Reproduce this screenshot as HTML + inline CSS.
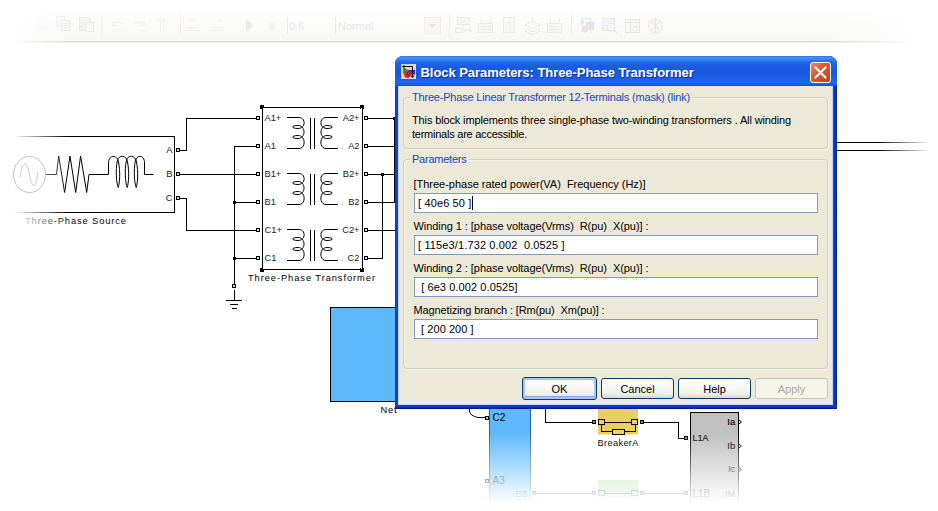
<!DOCTYPE html>
<html><head><meta charset="utf-8"><title>Block Parameters</title>
<style>
*{box-sizing:border-box;margin:0;padding:0}
html,body{width:938px;height:511px;overflow:hidden;background:#fff}
body{position:relative;font-family:"Liberation Sans",sans-serif}
#bg{position:absolute;left:0;top:0;width:938px;height:511px}
#bg text{font-family:"Liberation Sans",sans-serif}
.dlg{position:absolute;left:395px;top:56px;width:442px;height:353px;border-radius:8px 8px 0 0;
 background:linear-gradient(90deg,#0c30bc 0,#1044da 1px,#1040d4 3px,#1040d4 439px,#0c34c4 440px,#041c94 442px)}
.dlg:after{content:"";position:absolute;left:0;right:0;bottom:0;height:4px;background:linear-gradient(#1040d4 0,#0c38cc 2px,#04209c 3px,#00148a 4px)}
.title{position:absolute;left:0;top:0;width:442px;height:30px;border-radius:8px 8px 0 0;
 background:linear-gradient(#2a62d2 0,#4a90fa 1px,#3d84f6 3px,#2268ea 6px,#1a5ce2 10px,#1859de 17px,#1c60e8 23px,#2068f0 27px,#1a5adc 29px,#1648c4 30px)}
.title .tt{position:absolute;left:25.5px;top:9px;font:bold 13px "Liberation Sans",sans-serif;letter-spacing:-0.05px;color:#fff;white-space:nowrap;text-shadow:1px 1px 0 #0c2f9a}
.title svg{position:absolute}
.close{position:absolute;left:415px;top:6px;width:21px;height:21px;border:1px solid #fff;border-radius:3px;background:linear-gradient(135deg,#ee8a66 0,#dd5a35 40%,#c43c18 100%)}
.body{position:absolute;left:3px;top:30px;width:435px;height:319px;background:#ece9d8;border:1px solid #c4d4f2;border-top:0}
.t{position:absolute;font:11px "Liberation Sans",sans-serif;color:#000;white-space:pre}
.gb{position:absolute;border:1px solid #d0d0bf;border-radius:4px;box-shadow:inset 1px 1px 0 rgba(255,255,255,.45),1px 1px 0 rgba(255,255,255,.45)}
.gl{position:absolute;font:11px "Liberation Sans",sans-serif;color:#1446c0;background:#ece9d8;padding:0 2px;white-space:nowrap}
.in{position:absolute;left:414px;width:404px;height:20px;background:#fff;border:1px solid #7f9db9;font:11px "Liberation Sans",sans-serif;line-height:18px;padding-left:3px;white-space:pre;color:#000}
.btn{position:absolute;top:378px;width:73px;height:21px;border:1px solid #003c74;border-radius:3px;background:linear-gradient(#fff 0,#f8f7f2 50%,#efeee6 80%,#d9d5c6 100%);font:11px "Liberation Sans",sans-serif;text-align:center;line-height:20px;color:#000}
.btn.def{top:377px;width:75px;height:23px;line-height:22px;box-shadow:inset 0 0 0 2px #a9c3f2,inset 0 -3px 0 #86a9e6}
.btn.dis{color:#aca899;border-color:#c9c7ba;background:#f5f4ea}
</style></head><body>
<svg id="bg" width="938" height="511" viewBox="0 0 938 511">
<defs>
<linearGradient id="fl" x1="0" x2="1" y1="0" y2="0"><stop offset="0" stop-color="#fff" stop-opacity="1"/><stop offset="0.2" stop-color="#fff" stop-opacity="1"/><stop offset="1" stop-color="#fff" stop-opacity="0"/></linearGradient>
<linearGradient id="fr" x1="0" x2="1" y1="0" y2="0"><stop offset="0" stop-color="#fff" stop-opacity="0"/><stop offset="1" stop-color="#fff" stop-opacity="1"/></linearGradient>
<linearGradient id="fb" x1="0" x2="0" y1="0" y2="1"><stop offset="0" stop-color="#fff" stop-opacity="0"/><stop offset="0.9" stop-color="#fff" stop-opacity="1"/><stop offset="1" stop-color="#fff" stop-opacity="1"/></linearGradient>
<linearGradient id="ft" x1="0" x2="0" y1="0" y2="1"><stop offset="0" stop-color="#fff" stop-opacity="1"/><stop offset="1" stop-color="#fff" stop-opacity="0"/></linearGradient>
</defs>
<linearGradient id="tb" x1="0" x2="0" y1="0" y2="1"><stop offset="0.2" stop-color="#ffffff"/><stop offset="1" stop-color="#f8f7f4"/></linearGradient>
<rect x="0" y="0" width="938" height="41" fill="url(#tb)"/>
<rect x="0" y="41" width="938" height="1" fill="#dad8d3"/>
<rect x="0" y="42" width="938" height="1" fill="#f0eeea"/>
<g id="toolbar" opacity="0.42">
<g fill="none" stroke="#dedede" stroke-width="1">
<path d="M39 17L44 28M45 17L40 28"/><circle cx="39.5" cy="29.5" r="1.8"/><circle cx="44.5" cy="29.5" r="1.8"/>
<rect x="56.5" y="16.5" width="8" height="10" fill="#f4f4f4" stroke="#d6d8de"/><rect x="61.5" y="20.5" width="8" height="10" fill="#f6f6f6" stroke="#ccd0d8"/><path d="M63 23.5H68M63 25.5H68M63 27.5H68" stroke="#d0d4dc"/>
<rect x="79.5" y="17.5" width="11" height="13" fill="#ece9e2" stroke="#dcdad4"/><rect x="85.5" y="22.5" width="8" height="9" fill="#f6f6f6" stroke="#d4d6dc"/>
<path d="M101.5 14V36M180.5 14V36" stroke="#e6e4df"/>
<path d="M112 26C114 21 121 21 124 25M112 26L113 21M112 26L117 25.5" stroke="#e2e2e2"/>
<path d="M145 26C143 21 136 21 133 25M145 26L144 21M145 26L140 25.5" stroke="#e2e2e2"/>
<path d="M160.500 31V20M163.500 31V20M158 22L162 17L166 22" stroke="#e0e0e0"/>
<path d="M186 30.500H199M187 27.500H198M190 22L192.500 19L195 22" stroke="#e4e4e4"/>
<path d="M211 30.500H225M213 27.500H224M217 22L219.500 19L222 22" stroke="#e4e4e4"/>
</g>
<path d="M246 19L253 25.500L246 32Z" fill="#d2d2d2"/>
<rect x="269" y="23" width="6" height="6" fill="#e6e6e6"/>
<rect x="287" y="17" width="42" height="17" fill="#fff"/>
<path d="M287.500 17V34" stroke="#dad8d4" fill="none"/>
<text x="289" y="30" font-size="11" fill="#cccccc">0.6</text>
<rect x="335" y="17" width="106" height="17" fill="#fff"/>
<path d="M335.500 17V34" stroke="#dad8d4" fill="none"/>
<text x="338" y="30" font-size="11" fill="#cccccc">Normal</text>
<rect x="424.500" y="17.500" width="16" height="16" fill="#f3f2ee" stroke="#e2e0da"/>
<path d="M429 24H436L432.500 28Z" fill="#c4c4c4"/>
<path d="M449.500 14V36M571.500 14V36" stroke="#e6e4df" fill="none"/>
<g fill="none" stroke="#d6d6d6" stroke-width="1" shape-rendering="crispEdges">
<rect x="457.500" y="17.500" width="12" height="7" fill="#f2f2f2"/><path d="M461 19L463.500 22L466 19" /><rect x="455.500" y="28.500" width="7" height="4" fill="#fff"/><path d="M463 30.500H471M469 28.500L471 30.500L469 32.500M463.500 25V28"/>
<rect x="478.500" y="23.500" width="14" height="9" fill="#f0f0f0"/><path d="M481 18V23M490 18V23M481 26.500H490M481 29.500H490" />
<rect x="503.500" y="17.500" width="11" height="15" fill="#f6f6f6"/><path d="M509 21V29M507 23L509 21L511 23" stroke="#dcdcdc"/>
<path d="M525 25L532 21L540 25L532 29ZM525 28L532 32L540 28M525 31L532 35L540 31M532 17V23" />
<rect x="547.500" y="23.500" width="14" height="9" fill="#f0f0f0"/><path d="M550 18V23M559 18V23M550 26.500H559M550 29.500H559" />
</g>
<circle cx="585" cy="29" r="3.500" fill="#f0b8b4"/><rect x="586" y="22" width="8" height="8" fill="#c4c4ec"/><path d="M581 18V26L585 22Z" fill="#b8e0b8"/><path d="M581.500 18.500H590.500V33" stroke="#c8c8c8" fill="none"/>
<rect x="602.500" y="18.500" width="12" height="12" fill="#e6eaf2" stroke="#c8ccd6"/><circle cx="611" cy="27" r="4" fill="#f4f6fa" stroke="#c4c8d0"/><path d="M614 30L617 33" stroke="#c4c8d0" stroke-width="1.500"/>
<rect x="625.500" y="19.500" width="14" height="13" fill="#f4f4f4" stroke="#c8c8cc"/><path d="M626 22.500H639M630.500 23V32M633 26.500H637V31" stroke="#c8c8cc" fill="none"/>
<circle cx="655.500" cy="26" r="7" fill="#fbeeee" stroke="#ecc6c6"/><path d="M651 21L660 31M660 21L651 31M655.500 19V33" stroke="#eab8b8" fill="none"/>
</g>
<g id="diagram" fill="none" stroke="#000" stroke-width="1" shape-rendering="crispEdges">
<path d="M8 136.5H174.5V212.5H8"/>
</g>
<g fill="none" stroke="#000" stroke-width="1">
<path d="M45.5 174.5H56.5L58.7 156L64.6 192.5L70 156L75.7 192.5L80.6 156L86.7 192.5L89 174.5H108.5"/>
<path d="M108.5 174.5V163C108.5 154.5 117.5 154.5 118.5 162C120.5 172 119.7 183 118.2 187.5C116.3 183 115.5 170 117.3 161C118.5 154.5 126.5 154.5 127.5 162C129.5 172 128.7 183 127.2 187.5C125.3 183 124.5 170 126.3 161C127.5 154.5 135.5 154.5 136.5 162C138.5 172 137.7 183 136.2 187.5C134.3 183 133.5 170 135.3 161C136.5 154.5 144.5 154.5 144.5 163V174.5H153.5"/>
</g>
<g id="wires" fill="none" stroke="#000" stroke-width="1" shape-rendering="crispEdges">
<rect x="176.5" y="148.5" width="3" height="3" fill="#ccc"/>
<rect x="176.5" y="172.5" width="3" height="3" fill="#ccc"/>
<rect x="176.5" y="196.5" width="3" height="3" fill="#ccc"/>
<path d="M180 150.5H186.5V118.5H256"/>
<path d="M180 174.5H256"/>
<path d="M180 198.5H186.5V230.5H256"/>
<path d="M256 146.5H234.5V284M234.5 290V300.5M234.5 202.5H256M234.5 258.5H256"/>
<path d="M226 300.5H242M230 304.5H238M232 308.5H237"/>
<rect x="232.5" y="284.5" width="3" height="3" fill="#ccc"/>
<rect x="262.5" y="107.5" width="100" height="162" fill="#fff"/>
<rect x="256.5" y="116.5" width="3" height="3" fill="#ccc"/>
<rect x="364.5" y="116.5" width="3" height="3" fill="#ccc"/>
<rect x="256.5" y="144.5" width="3" height="3" fill="#ccc"/>
<rect x="364.5" y="144.5" width="3" height="3" fill="#ccc"/>
<rect x="256.5" y="172.5" width="3" height="3" fill="#ccc"/>
<rect x="364.5" y="172.5" width="3" height="3" fill="#ccc"/>
<rect x="256.5" y="200.5" width="3" height="3" fill="#ccc"/>
<rect x="364.5" y="200.5" width="3" height="3" fill="#ccc"/>
<rect x="256.5" y="228.5" width="3" height="3" fill="#ccc"/>
<rect x="364.5" y="228.5" width="3" height="3" fill="#ccc"/>
<rect x="256.5" y="256.5" width="3" height="3" fill="#ccc"/>
<rect x="364.5" y="256.5" width="3" height="3" fill="#ccc"/>
<path d="M368 118.5H394.5V202.5H368"/>
<path d="M368 146.5H396"/>
<path d="M368 174.5H396M382.5 174.5V258.5H368"/>
<path d="M368 230.5H396"/>
<path d="M836 142.5H938M836 150.5H938"/>
</g>
<g fill="#000" shape-rendering="crispEdges">
<rect x="260" y="105" width="4" height="4"/>
<rect x="360" y="105" width="4" height="4"/>
<rect x="260" y="268" width="4" height="4"/>
<rect x="360" y="268" width="4" height="4"/>
<rect x="263" y="108" width="1" height="1" fill="#fff"/>
<rect x="361" y="108" width="1" height="1" fill="#fff"/>
<rect x="263" y="268" width="1" height="1" fill="#fff"/>
<rect x="361" y="268" width="1" height="1" fill="#fff"/>
<rect x="233" y="201" width="3" height="3"/>
<rect x="233" y="257" width="3" height="3"/>
<rect x="381" y="173" width="3" height="3"/>
<rect x="393" y="117" width="3" height="3"/>
</g>
<g fill="none" stroke="#000" stroke-width="1">
<path d="M287 117.5H299C306 117.5 306 128.5 298 128.5C291 128.5 291 125.5 298 125.5C306 125.5 306 138.5 298 138.5C291 138.5 291 135.5 298 135.5C306 135.5 306 148.5 299 148.5H287"/>
<path d="M287 117.5H299C306 117.5 306 128.5 298 128.5C291 128.5 291 125.5 298 125.5C306 125.5 306 138.5 298 138.5C291 138.5 291 135.5 298 135.5C306 135.5 306 148.5 299 148.5H287" transform="translate(625,0) scale(-1,1)"/>
<path d="M310.5 117.5V148.5M314.5 117.5V148.5" shape-rendering="crispEdges"/>
<path d="M287 173.5H299C306 173.5 306 184.5 298 184.5C291 184.5 291 181.5 298 181.5C306 181.5 306 194.5 298 194.5C291 194.5 291 191.5 298 191.5C306 191.5 306 204.5 299 204.5H287"/>
<path d="M287 173.5H299C306 173.5 306 184.5 298 184.5C291 184.5 291 181.5 298 181.5C306 181.5 306 194.5 298 194.5C291 194.5 291 191.5 298 191.5C306 191.5 306 204.5 299 204.5H287" transform="translate(625,0) scale(-1,1)"/>
<path d="M310.5 173.5V204.5M314.5 173.5V204.5" shape-rendering="crispEdges"/>
<path d="M287 229.5H299C306 229.5 306 240.5 298 240.5C291 240.5 291 237.5 298 237.5C306 237.5 306 250.5 298 250.5C291 250.5 291 247.5 298 247.5C306 247.5 306 260.5 299 260.5H287"/>
<path d="M287 229.5H299C306 229.5 306 240.5 298 240.5C291 240.5 291 237.5 298 237.5C306 237.5 306 250.5 298 250.5C291 250.5 291 247.5 298 247.5C306 247.5 306 260.5 299 260.5H287" transform="translate(625,0) scale(-1,1)"/>
<path d="M310.5 229.5V260.5M314.5 229.5V260.5" shape-rendering="crispEdges"/>
</g>
<g font-size="9.3" fill="#222">
<text x="264.5" y="120.8">A1+</text>
<text x="359.5" y="120.8" text-anchor="end">A2+</text>
<text x="264.5" y="148.8">A1</text>
<text x="359.5" y="148.8" text-anchor="end">A2</text>
<text x="264.5" y="176.8">B1+</text>
<text x="359.5" y="176.8" text-anchor="end">B2+</text>
<text x="264.5" y="204.8">B1</text>
<text x="359.5" y="204.8" text-anchor="end">B2</text>
<text x="264.5" y="232.8">C1+</text>
<text x="359.5" y="232.8" text-anchor="end">C2+</text>
<text x="264.5" y="260.8">C1</text>
<text x="359.5" y="260.8" text-anchor="end">C2</text>
<text x="172.5" y="153.2" text-anchor="end">A</text>
<text x="172.5" y="177.2" text-anchor="end">B</text>
<text x="172.5" y="201.2" text-anchor="end">C</text>
</g>
<g font-size="9.3" fill="#000">
<text x="25" y="224" textLength="101">Three-Phase Source</text>
<text x="248" y="281" textLength="127">Three-Phase Transformer</text>
<text x="380.5" y="412.5" textLength="16">Net</text>
</g>
<rect x="330.5" y="307.5" width="80" height="94" fill="#5db9fc" stroke="#000" shape-rendering="crispEdges"/>
<rect x="490" y="405" width="41" height="106" fill="#5db9fc"/>
<path d="M489.5 405V511M530.5 405V511" stroke="#2a5f9a" fill="none" shape-rendering="crispEdges"/>
<path d="M469.5 406V411Q470 416 478 417.5H485" stroke="#000" fill="none"/>
<rect x="485.5" y="416.5" width="3" height="3" fill="#ccc" stroke="#000" shape-rendering="crispEdges"/>
<text x="492.5" y="421" font-size="10" fill="#000">C2</text>
<rect x="485.5" y="479.5" width="3" height="3" fill="#ccc" stroke="#000" shape-rendering="crispEdges"/>
<text x="492.5" y="484" font-size="10" fill="#000">A3</text>
<rect x="598" y="405" width="40" height="29.5" fill="#eccf63"/>
<g fill="none" stroke="#000" shape-rendering="crispEdges">
<path d="M545.5 405V422.5H593"/>
<rect x="592.5" y="420.5" width="3" height="3" fill="#888"/>
<rect x="640.5" y="420.5" width="3" height="3" fill="#888"/>
<rect x="598.5" y="419.5" width="6" height="5"/>
<rect x="631.500" y="419.5" width="6" height="5"/>
<path d="M605 422.5H631M601.5 425V431.5H612M625 431.5H635.5V425"/>
<rect x="612.5" y="429.5" width="12" height="5"/>
<path d="M644 422.5H678.5V438.5H684"/>
<rect x="684.5" y="436.5" width="3" height="3" fill="#888"/>
</g>
<rect x="690.5" y="412.5" width="48" height="110" fill="#c0c0c0" stroke="#000" shape-rendering="crispEdges"/>
<g font-size="9.5" fill="#000" stroke="#000" stroke-width="0.12">
<text x="692.5" y="440.8" font-size="9.3" textLength="16">L1A</text>
<text x="735.3" y="424.8" text-anchor="end">Ia</text>
<text x="735.3" y="448.8" text-anchor="end">Ib</text>
<text x="735.3" y="472.3" text-anchor="end">Ic</text>
<text x="692.5" y="496.5" font-size="10">L1B</text>
<text x="735.3" y="496.5" text-anchor="end">IM</text>
<text x="527" y="496.5" text-anchor="end">B3</text>
</g>
<path d="M739 420L741.5 422L739 424M739 444L741.5 446L739 448M739 467.5L741.5 469.5L739 471.5" fill="none" stroke="#000"/>
<rect x="598" y="480" width="40" height="18" fill="#9fe09f"/>
<path d="M535 493.5H593M644 493.5H684M605 493.5H631" stroke="#000" fill="none" shape-rendering="crispEdges"/>
<rect x="592.5" y="491.5" width="3" height="3" fill="#888" stroke="#000" shape-rendering="crispEdges"/><rect x="640.5" y="491.5" width="3" height="3" fill="#888" stroke="#000" shape-rendering="crispEdges"/><rect x="684.5" y="491.5" width="3" height="3" fill="#888" stroke="#000" shape-rendering="crispEdges"/><rect x="532.5" y="491.5" width="3" height="3" fill="#888" stroke="#000" shape-rendering="crispEdges"/>
<rect x="598.5" y="490.5" width="6" height="5" fill="none" stroke="#000" shape-rendering="crispEdges"/><rect x="631.5" y="490.5" width="6" height="5" fill="none" stroke="#000" shape-rendering="crispEdges"/>
<rect x="0" y="130" width="68" height="100" fill="url(#fl)"/>
<ellipse cx="29.5" cy="174.5" rx="16" ry="18" stroke="#c2c2c2" fill="none"/>
<path d="M20 178C22 160 27 160 29.5 174.5S36 190 38 172" stroke="#cacaca" fill="none"/>
<rect x="878" y="138" width="52" height="18" fill="url(#fr)"/><rect x="930" y="138" width="8" height="18" fill="#fff"/>
<rect x="470" y="432" width="300" height="79" fill="url(#fb)"/>
<text x="597.5" y="445.5" font-size="9.3" fill="#111" textLength="41">BreakerA</text>
<rect x="0" y="0" width="70" height="44" fill="url(#fl)"/>
<rect x="830" y="0" width="85" height="44" fill="url(#fr)"/><rect x="915" y="0" width="23" height="44" fill="#fff"/>
</svg>
<div class="dlg">
 <div class="title">
  <svg style="left:6px;top:8px" width="16" height="16" viewBox="0 0 16 16">
   <rect x="0" y="0" width="15" height="15" fill="#d9d5cf"/>
   <polygon points="2,3 2,10 8,6.5" fill="#2aa02a"/>
   <rect x="7" y="6" width="7" height="4.5" fill="#2a22c8"/>
   <circle cx="6.5" cy="10.5" r="3.4" fill="#e02a20"/>
   <path d="M7 6.5h3v3.5a3.4 3.4 0 0 1-3-3.5z" fill="#8a20b0"/>
   <path d="M1.5 2.5H11.5V12" fill="none" stroke="#111" stroke-width="1"/>
   <path d="M9.5 11.5h4l-2 2.5zM3.5 1v3l-2.5-1.5z" fill="#111"/>
   <path d="M6.5 8.5v2.5h2" fill="none" stroke="#700" stroke-width="1"/>
  </svg>
  <span class="tt">Block Parameters: Three-Phase Transformer</span>
  <div class="close"><svg style="left:0;top:0" width="19" height="19" viewBox="0 0 19 19"><path d="M4.5 4.5L14.5 14.5M14.5 4.5L4.5 14.5" stroke="#fff" stroke-width="2.2" stroke-linecap="round"/></svg></div>
 </div>
 <div class="body"></div>
</div>
<div class="gb" style="left:403px;top:97px;width:425px;height:52px"></div>
<div class="gl" style="left:410px;top:91px;letter-spacing:-0.196px">Three-Phase Linear Transformer 12-Terminals (mask) (link)</div>
<div class="t" style="left:412px;top:114px;letter-spacing:-0.132px">This block implements three single-phase two-winding transformers . All winding</div>
<div class="t" style="left:412px;top:128px;letter-spacing:-0.242px">terminals are accessible.</div>
<div class="gb" style="left:403px;top:159px;width:425px;height:210px"></div>
<div class="gl" style="left:410px;top:153px;letter-spacing:-0.236px">Parameters</div>
<div class="t" style="left:413.5px;top:178px;letter-spacing:-0.016px">[Three-phase rated power(VA)  Frequency (Hz)]</div>
<div class="in" style="top:193px;letter-spacing:0.136px">[ 40e6 50 ]</div>
<div class="t" style="left:413.5px;top:220px;letter-spacing:-0.062px">Winding 1 : [phase voltage(Vrms)  R(pu)  X(pu)] :</div>
<div class="in" style="top:235px;letter-spacing:0.132px">[ 115e3/1.732 0.002  0.0525 ]</div>
<div class="t" style="left:413.5px;top:262px;letter-spacing:-0.062px">Winding 2 : [phase voltage(Vrms)  R(pu)  X(pu)] :</div>
<div class="in" style="top:277px;letter-spacing:0.089px"> [ 6e3 0.002 0.0525]</div>
<div class="t" style="left:413.5px;top:304px;letter-spacing:-0.135px">Magnetizing branch : [Rm(pu)  Xm(pu)] :</div>
<div class="in" style="top:319px;letter-spacing:0.045px"> [ 200 200 ]</div>
<div style="position:absolute;left:472px;top:196px;width:1px;height:14px;background:#000"></div>
<div class="btn def" style="left:522px">OK</div>
<div class="btn" style="left:601px">Cancel</div>
<div class="btn" style="left:678px">Help</div>
<div class="btn dis" style="left:755px">Apply</div>
</body></html>
